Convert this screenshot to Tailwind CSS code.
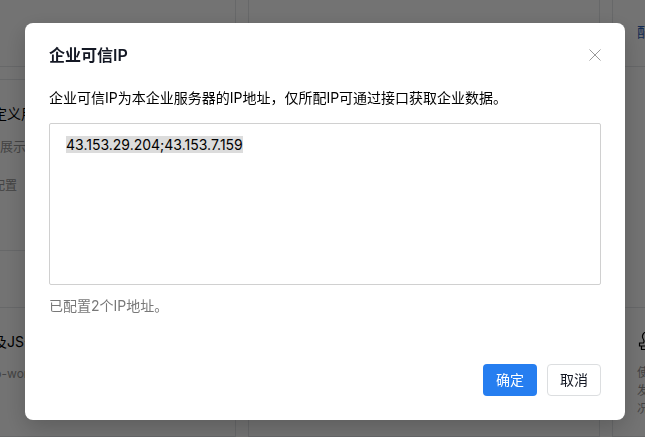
<!DOCTYPE html>
<html lang="zh-CN">
<head>
  <meta charset="UTF-8" />
  <meta name="viewport" content="width=device-width, initial-scale=1" />
  <title>企业可信IP</title>
  <script src="https://cdn.jsdelivr.net/npm/@tailwindcss/browser@4"></script>
</head>
<body class="min-h-screen overflow-hidden bg-white font-[Inter,'Noto_Sans_CJK_SC',sans-serif] text-sm text-black">

  <!-- 应用列表 -->
  <main class="-ml-[116px] grid h-screen grid-cols-[352px_352px_352px] grid-rows-[67px_172px_44px_1fr] gap-x-3 overflow-hidden">
    <section class="border-x border-b border-[#e4e6e9]"></section>
    <section class="border-x border-b border-[#e4e6e9]"></section>
    <section class="border-x border-b border-[#e4e6e9] px-6 pt-[22px]">
      <a href="#" class="leading-5 text-[#2c62b8]">配置</a>
    </section>

    <section class="mt-3 -mb-3 border border-[#e4e6e9] px-6 pt-6">
      <h3 class="leading-5">成员资料页自定义用户</h3>
      <p class="mt-3 text-[13px] leading-5 text-[#959595]">在成员资料页中展示</p>
      <p class="mt-5 text-xs leading-5 text-[#959595]">管理员尚未完成配置</p>
    </section>
    <div class="col-span-2"></div>

    <div class="col-span-3"></div>

    <section class="mt-6 border border-[#e4e6e9] px-6 pt-6">
      <h3 class="leading-5">网页授权登录及JS-SDK</h3>
      <p class="mt-3 text-xs leading-5 text-[#959595]">可信域名 pro-wo-work</p>
    </section>
    <section class="mt-6 border border-[#e4e6e9]"></section>
    <section class="mt-6 border border-[#e4e6e9] px-6 pt-6">
      <svg class="size-5" viewBox="0 0 20 20" fill="none" stroke="#000" stroke-width="1.2">
        <path d="M6.500 11C7.500 9.500 7 8 6 6.500a4.500 4.500 0 1 1 8 0C13 8 12.500 9.500 13.500 11H17.500v3h-15v-3zM4.500 14v3.500h11V14" />
      </svg>
      <p class="mt-3 w-[300px] text-xs leading-[18px] text-[#959595]">使用企业微信账号<br>发起授权登录<br>况且支持扫码</p>
    </section>
  </main>

  <!-- 弹窗 -->
  <div class="fixed inset-0 bg-black/55 pt-[23px] pr-5 pl-[25px]">
    <div role="dialog" aria-labelledby="dialog-title" class="rounded-lg bg-white p-6 shadow-[0_8px_24px_rgba(0,0,0,0.2)]">
      <div class="flex items-center justify-between">
        <h2 id="dialog-title" class="text-base leading-4 font-semibold text-[#141824]">企业可信IP</h2>
        <button type="button" aria-label="关闭" class="text-[#999]">
          <svg class="size-3" viewBox="0 0 12 12" fill="none" stroke="currentColor">
            <path d="M.5.5l11 11M11.500.5l-11 11" />
          </svg>
        </button>
      </div>
      <label for="ip-list" class="mt-6 block leading-[22px]">企业可信IP为本企业服务器的IP地址，仅所配IP可通过接口获取企业数据。</label>
      <textarea id="ip-list" spellcheck="false" class="mt-[14px] block h-[162px] w-full resize-none rounded-xs border border-[#d0d0d0] px-4 py-3 leading-[17px] caret-transparent outline-none selection:bg-[#dcdcdc] selection:text-black">43.153.29.204;43.153.7.159</textarea>
      <p class="mt-[10px] leading-[22px] text-[#787878]">已配置2个IP地址。</p>
      <div class="mt-[47px] flex justify-end gap-[10px]">
        <button type="button" class="h-8 rounded bg-[#267ef0] px-[13px] text-white">确定</button>
        <button type="button" class="h-8 rounded border border-[#dcdee0] bg-white px-3 text-[#141824]">取消</button>
      </div>
    </div>
  </div>

  <script>
    const ipList = document.getElementById("ip-list");
    ipList.focus();
    ipList.select();
  </script>
</body>
</html>
